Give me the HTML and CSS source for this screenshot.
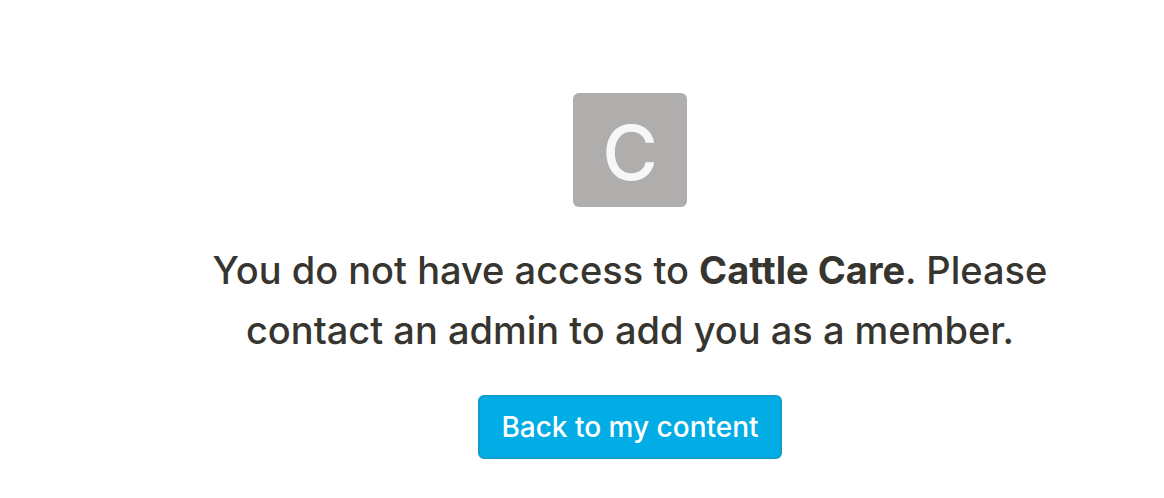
FILE: index.html
```html
<!DOCTYPE html>
<html lang="en">
<head>
<meta charset="utf-8">
<meta name="viewport" content="width=device-width, initial-scale=1">
<title>No access</title>
<link rel="stylesheet" href="styles.css">
</head>
<body>
<main class="page">
  <div class="avatar">C</div>
  <p class="message">You do not have access to <strong class="workspace">Cattle Care</strong>. Please contact an admin to add you as a member.</p>
  <button class="button" type="button">Back to my content</button>
</main>
</body>
</html>
```
FILE: styles.css
```css
body {
  margin: 0;
  background: #fff;
  color: #37352f;
  font-family: Inter, "Liberation Sans", sans-serif;
}

.page {
  display: flex;
  flex-direction: column;
  align-items: center;
  padding: 93px 0 24px 96px;
}

.avatar {
  display: flex;
  align-items: center;
  justify-content: center;
  box-sizing: border-box;
  width: 114px;
  height: 114px;
  padding-top: 4px;
  border-radius: 6px;
  background: #afaeac;
  color: #f7f7f7;
  font-size: 76px;
  font-weight: 500;
  line-height: 1;
}

.message {
  max-width: 860px;
  margin: 33px 0 35px;
  font-size: 38px;
  font-weight: 500;
  line-height: 60px;
  text-align: center;
}

.workspace {
  font-weight: 700;
}

.button {
  height: 64px;
  padding: 0 21px;
  border: 2px solid #0f9dce;
  border-radius: 6px;
  background: #02ace4;
  color: #fff;
  font: 500 28px/36px Inter, "Liberation Sans", sans-serif;
  cursor: pointer;
}
```
